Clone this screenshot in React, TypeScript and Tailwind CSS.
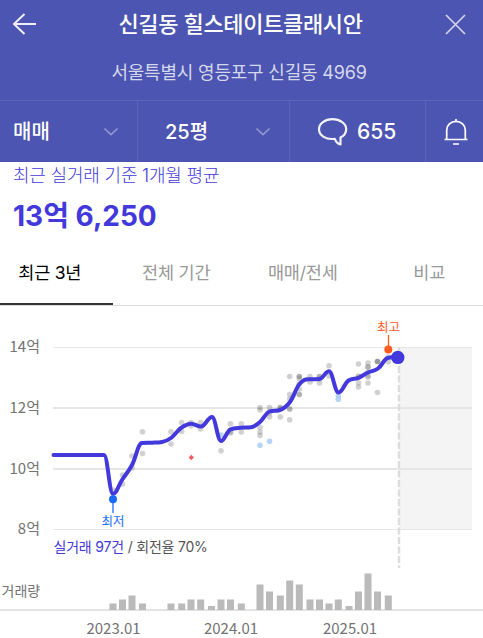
import React from "react";

type Point = [number, number];

const line: Point[] = [
  [53.5, 455], [64, 455], [74, 455], [84, 455], [94, 455], [104, 455], [113, 494], [122, 480],
  [132, 465], [142, 443], [152, 442.7], [162, 442], [171, 438], [181, 428], [191, 423.7],
  [201, 426.5], [212, 417], [221, 441], [230.5, 429.3], [241, 427.7], [251, 427.3], [260, 422],
  [269.5, 411.5], [280, 410], [290, 402], [299.5, 384], [309.5, 379.3], [319.5, 379], [329, 371.3],
  [338.5, 392.5], [348.5, 380.5], [358.5, 377.8], [368, 372.5], [378, 368.5], [388.3, 357.8], [397, 357],
];

/* Spline that never overshoots a local extreme. */
function spline(points: Point[]): string {
  let path = `M${points[0][0]} ${points[0][1]}`;
  let out: Point = points[0];
  for (let i = 1; i < points.length; i++) {
    const [x, y] = points[i];
    let left: Point = [x, y];
    let right: Point = [x, y];
    if (i < points.length - 1) {
      const [lx, ly] = points[i - 1];
      const [nx, ny] = points[i + 1];
      left = [(1.5 * x + lx) / 2.5, (1.5 * y + ly) / 2.5];
      right = [(1.5 * x + nx) / 2.5, (1.5 * y + ny) / 2.5];
      const shift = ((right[1] - left[1]) * (right[0] - x)) / (right[0] - left[0]) + y - right[1];
      left[1] += shift;
      right[1] += shift;
      const hiL = Math.max(ly, y), loL = Math.min(ly, y);
      if (left[1] > hiL) { left[1] = hiL; right[1] = 2 * y - hiL; }
      else if (left[1] < loL) { left[1] = loL; right[1] = 2 * y - loL; }
      const hiR = Math.max(ny, y), loR = Math.min(ny, y);
      if (right[1] > hiR) { right[1] = hiR; left[1] = 2 * y - hiR; }
      else if (right[1] < loR) { right[1] = loR; left[1] = 2 * y - loR; }
    }
    path += `C${out[0]} ${out[1]} ${left[0]} ${left[1]} ${x} ${y}`;
    out = right;
  }
  return path;
}

const deals: Point[] = [
  [113, 490], [122.5, 475], [122.5, 484], [132, 456], [132, 468], [142.5, 431.7], [142.5, 453.5],
  [171, 431.7], [171, 444], [181.7, 422.5], [181.7, 431.5], [191, 422.5], [191, 426], [200.5, 422.5], [200.5, 429],
  [221, 450.7], [230.5, 423.7], [230.5, 432], [230.5, 433], [241.3, 423.7], [241.3, 432],
  [260, 407.5], [260, 410], [260, 427.5], [260, 432], [260, 435.5], [269.5, 407.5], [269.5, 413], [269.5, 417],
  [280.3, 407.5], [280.3, 407.5], [280.3, 409], [280.3, 417], [289.7, 376.5], [289.7, 394.5], [289.7, 399],
  [289.7, 408.5], [289.7, 409.5], [289.7, 419.7], [299.3, 376.5], [299.3, 376.5], [299.3, 378.5], [299.3, 384],
  [299.3, 389], [299.3, 394.5], [299.3, 394.5], [310, 376.5], [310, 382], [319.5, 376.5], [319.5, 376.5], [319.5, 379],
  [319.5, 383], [329, 365.7], [329, 376], [358.5, 364], [358.5, 376], [358.5, 377], [358.5, 383], [358.5, 387],
  [368, 363], [368, 367], [368, 367], [368, 372], [368, 376], [368, 377], [368, 383],
  [377.5, 361.5], [377.5, 361.5], [377.5, 361.5], [377.5, 392.5], [388.3, 357], [388.3, 362],
];
const blueDeals: Point[] = [[221, 435], [260, 445.3], [269.5, 441.3], [338.3, 396], [338.3, 399.3]];

const bars: Point[] = [
  [113, 6.5], [122.5, 10.5], [132, 14.5], [142.5, 6.5], [171, 6.5], [181.7, 6.5], [191, 10.5], [200.7, 10.5],
  [211.5, 4], [221, 10.5], [230.5, 10.5], [241.3, 6.5], [260, 25.5], [269.5, 18.5], [280.3, 14.5], [289.7, 29.5],
  [299.3, 25.5], [310, 10.5], [319.5, 10.5], [329, 6.5], [338.3, 10.5], [349, 4], [358.5, 18.5], [368, 36.5],
  [377.5, 18.5], [388.3, 14.5],
];

const axis: { label: string; y: number; w: number }[] = [
  { label: "14억", y: 347.5, w: 1 },
  { label: "12억", y: 408, w: 2 },
  { label: "10억", y: 469, w: 2 },
  { label: "8억", y: 529.5, w: 1 },
];

const Chevron = () => (
  <svg width="16" height="10" viewBox="0 0 16 10" fill="none" stroke="#9398d0" strokeWidth="1.6">
    <path d="M1.5 1.5 8 7.7l6.5-6.2" />
  </svg>
);

function Header() {
  return (
    <header className="h-[162px] bg-[#4c55b1] text-white">
      <div className="flex h-[48px] items-center justify-between pr-[17px] pl-[12px]">
        <svg width="25" height="24" viewBox="0 0 25 24" fill="none" stroke="#eeeefa" strokeWidth="2">
          <path d="M24 12H2M12.5 2 2 12l10.5 10" />
        </svg>
        <h1 className="mr-[1px] text-[22px] leading-[46px] font-medium tracking-[-0.35px] whitespace-nowrap">신길동 힐스테이트클래시안</h1>
        <svg width="21" height="21" viewBox="0 0 21 21" fill="none" stroke="#d3d5ee" strokeWidth="1.7">
          <path d="m1 1 19 19M20 1 1 20" />
        </svg>
      </div>
      <p className="h-[52px] pr-[5px] text-center text-[18px] leading-[50px] tracking-[-0.2px] text-[#d5d7ed]">
        서울특별시 영등포구 신길동 4969
      </p>
      <div className="flex h-[62px] border-t border-[#5d65ba] text-[20px] font-medium">
        <div className="flex w-[138px] items-center justify-between border-r border-[#5d65ba] pr-[18px] pl-[13px]">
          매매
          <Chevron />
        </div>
        <div className="flex w-[152px] items-center justify-between border-r border-[#5d65ba] pr-[18px] pl-[27px]">
          25평
          <Chevron />
        </div>
        <div className="flex w-[136px] items-center gap-[9px] border-r border-[#5d65ba] pl-[27px]">
          <svg width="31" height="30" viewBox="0 0 31 30" fill="none" stroke="#f2f2fb" strokeWidth="2.2" strokeLinejoin="round">
            <path d="M23.5 27.5c-3-1-4.8-3-5.7-5.7C9 23 2 18.500 2 12.200 2 6.500 8 2.200 15.500 2.200S29.200 6.500 29.200 12.200c0 3.700-2.200 6.500-5.700 8.300Z" />
          </svg>
          <span className="text-[21px]">655</span>
        </div>
        <div className="flex flex-1 items-center pl-[18px]">
          <svg width="24" height="27" viewBox="0 0 24 27" fill="none" stroke="#fff" strokeWidth="1.700">
            <path d="M.5 21.500h23M2.700 21.500V12a9.300 8.600 0 0 1 18.600 0v9.500M12 3.500V1M9 26h6" />
          </svg>
        </div>
      </div>
    </header>
  );
}

function Tabs() {
  const tabs = ["최근 3년", "전체 기간", "매매/전세", "비교"];
  return (
    <nav className="h-[58px] overflow-hidden border-b border-[#dcdcdc]">
      <div className="-ml-[13.5px] flex h-full w-[506px]">
        {tabs.map((tab, i) => (
          <div
            key={tab}
            className={`w-[126.500px] border-b-2 text-center text-[17.500px] leading-[50px] tracking-[-0.2px] ${
              i === 0 ? "border-[#333] text-black" : "border-transparent text-[#999]"
            }`}
          >
            {tab}
          </div>
        ))}
      </div>
    </nav>
  );
}

function Chart() {
  return (
    <svg
      className="block font-['Noto_Sans_CJK_KR',sans-serif]"
      width="483"
      height="332"
      viewBox="0 306 483 332"
      fontSize="14"
      fill="#737373"
    >
      <rect x="399" y="347" width="73" height="183" fill="#f4f4f4" />
      {axis.map((a) => (
        <React.Fragment key={a.label}>
          <path d={`M53 ${a.y}H472`} stroke="#e6e6e6" strokeWidth={a.w} />
          <text x="40" y={a.y + 4.5} textAnchor="end" fontSize="15">{a.label}</text>
        </React.Fragment>
      ))}
      <path d="M399 347V568" stroke="#ddd" strokeWidth="2.500" strokeDasharray="7 2.500" />
      <g fill="#666" fillOpacity="0.3">
        {deals.map(([x, y], i) => <circle key={i} cx={x} cy={y} r="2.800" />)}
      </g>
      <g fill="#a9ccf2" fillOpacity="0.850">
        {blueDeals.map(([x, y], i) => <circle key={i} cx={x} cy={y} r="2.800" />)}
      </g>
      <path d="m191.300 454.800 2.700 2.700-2.700 2.700-2.700-2.700Z" fill="#f85b61" />
      <path d={spline(line)} fill="none" stroke="#4338dc" strokeWidth="4" strokeLinecap="round" strokeLinejoin="round" />
      <path d="M388.500 335v14" stroke="#ff5a1f" strokeWidth="1.300" />
      <circle cx="388.300" cy="349.500" r="4" fill="#ff5a1f" />
      <circle cx="397.800" cy="357.400" r="6.700" fill="#4338dc" />
      <text x="388.500" y="331.500" textAnchor="middle" fontSize="12.500" fill="#ff5a1f">최고</text>
      <path d="M113 499v14" stroke="#1a6bfa" strokeWidth="1.300" />
      <circle cx="113" cy="499.300" r="4" fill="#1a6bfa" />
      <text x="113" y="525.500" textAnchor="middle" fontSize="12.500" fill="#1a6bfa">최저</text>
      <text x="53.500" y="552" fontSize="14" className="font-['Inter','Noto_Sans_CJK_KR',sans-serif]" fill="#555" letterSpacing="-0.2">
        <tspan fill="#4338dc">실거래 97건</tspan> / 회전율 70%
      </text>
      <text x="1.500" y="595.500" fontSize="14">거래량</text>
      <path d="M0 610H483" stroke="#e2e2e2" strokeWidth="2" />
      <g fill="#bababa">
        {bars.map(([x, h]) => <rect key={x} x={x - 3.500} y={610 - h} width="7" height={h} />)}
      </g>
      <g fontSize="15" textAnchor="middle">
        <text x="113.500" y="634">2023.01</text>
        <text x="231" y="634">2024.01</text>
        <text x="350" y="634">2025.01</text>
      </g>
    </svg>
  );
}

export default function App() {
  return (
    <main className="h-[638px] w-[483px] overflow-hidden bg-white font-['Inter','Noto_Sans_CJK_KR',sans-serif]">
      <Header />
      <section className="h-[86px] pl-[13px] text-[#4338dc]">
        <p className="h-[30px] text-[18px] leading-[28px] font-light tracking-[-0.2px]">최근 실거래 기준 1개월 평균</p>
        <p className="text-[28px] leading-[48px] font-bold">13억 6,250</p>
      </section>
      <Tabs />
      <Chart />
    </main>
  );
}
